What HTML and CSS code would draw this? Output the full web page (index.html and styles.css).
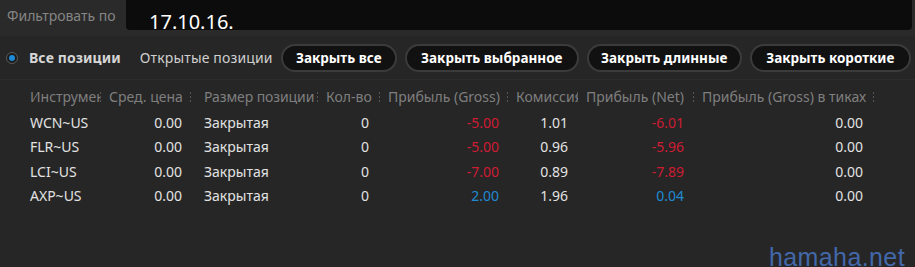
FILE: index.html
```html
<!DOCTYPE html>
<html lang="ru">
<head>
<meta charset="utf-8">
<link rel="stylesheet" href="styles.css">
</head>
<body>
<div class="topbar">
  <div class="filter-label">Фильтровать по</div>
  <div class="filter-input"><span class="filter-value">17.10.16.</span></div>
</div>
<div class="toolbar">
  <span class="radio"><span class="radio-dot"></span></span>
  <span class="tab tab-active">Все позиции</span>
  <span class="tab">Открытые позиции</span>
  <div class="buttons">
    <button class="btn btn-1">Закрыть все</button>
    <button class="btn btn-2">Закрыть выбранное</button>
    <button class="btn btn-3">Закрыть длинные</button>
    <button class="btn btn-4">Закрыть короткие</button>
  </div>
</div>
<div class="table">
  <div class="row head">
    <div class="c c1">Инструмент</div>
    <div class="c c2">Сред. цена</div>
    <div class="c c3">Размер позиции</div>
    <div class="c c4">Кол-во</div>
    <div class="c c5">Прибыль (Gross)</div>
    <div class="c c6">Комиссия</div>
    <div class="c c7">Прибыль (Net)</div>
    <div class="c c8">Прибыль (Gross) в тиках</div>
  </div>
  <div class="row">
    <div class="c c1">WCN~US</div><div class="c c2 r">0.00</div><div class="c c3">Закрытая</div><div class="c c4 r">0</div>
    <div class="c c5 r neg">-5.00</div><div class="c c6 r">1.01</div><div class="c c7 r neg">-6.01</div><div class="c c8 r">0.00</div>
  </div>
  <div class="row">
    <div class="c c1">FLR~US</div><div class="c c2 r">0.00</div><div class="c c3">Закрытая</div><div class="c c4 r">0</div>
    <div class="c c5 r neg">-5.00</div><div class="c c6 r">0.96</div><div class="c c7 r neg">-5.96</div><div class="c c8 r">0.00</div>
  </div>
  <div class="row">
    <div class="c c1">LCI~US</div><div class="c c2 r">0.00</div><div class="c c3">Закрытая</div><div class="c c4 r">0</div>
    <div class="c c5 r neg">-7.00</div><div class="c c6 r">0.89</div><div class="c c7 r neg">-7.89</div><div class="c c8 r">0.00</div>
  </div>
  <div class="row">
    <div class="c c1">AXP~US</div><div class="c c2 r">0.00</div><div class="c c3">Закрытая</div><div class="c c4 r">0</div>
    <div class="c c5 r pos">2.00</div><div class="c c6 r">1.96</div><div class="c c7 r pos">0.04</div><div class="c c8 r">0.00</div>
  </div>
</div>
<div class="watermark">hamaha.net</div>
</body>
</html>
```
FILE: styles.css
```css
html, body {
  margin: 0;
  padding: 0;
  background: #262626;
  font-family: "Noto Sans", "Open Sans", sans-serif;
  font-size: 14px;
  color: #e2e2e2;
  width: 915px;
  height: 267px;
  overflow: hidden;
}
.topbar {
  display: flex;
  align-items: flex-start;
  height: 36px;
  background: #2a2a2a;
}
.filter-label {
  width: 126px;
  padding-left: 7px;
  box-sizing: border-box;
  line-height: 31px;
  color: #858585;
  font-size: 14px;
  white-space: nowrap;
}
.filter-input {
  flex: 1;
  height: 30px;
  margin-right: 3px;
  background: #0c0c0c;
  border-radius: 0 0 4px 4px;
  overflow: hidden;
  padding-left: 23px;
}
.filter-value {
  display: block;
  font-size: 20px;
  line-height: 20px;
  padding-top: 12px;
  color: #ffffff;
}
.toolbar {
  display: flex;
  align-items: center;
  height: 44px;
  box-sizing: border-box;
  border-bottom: 1px solid #2c2c2c;
}
.radio {
  width: 10px;
  height: 10px;
  margin-left: 6px;
  border-radius: 50%;
  border: 1px solid #5a5a5a;
  background: #1b1b1b;
  display: flex;
  align-items: center;
  justify-content: center;
}
.radio-dot {
  width: 6px;
  height: 6px;
  border-radius: 50%;
  background: #1e8ad6;
}
.tab {
  color: #cfcfcf;
  font-size: 14px;
  white-space: nowrap;
  letter-spacing: 0.15px;
}
.tab-active {
  font-weight: bold;
  color: #d6d6d6;
  margin-left: 11px;
  margin-right: 19px;
  letter-spacing: 0.1px;
}
.buttons {
  display: flex;
  gap: 8px;
  margin-left: 8px;
}
.btn {
  font-family: "Noto Sans", "Open Sans", sans-serif;
  font-size: 13.5px;
  font-weight: bold;
  color: #ffffff;
  background: #111111;
  border: 2px solid #3b3b3b;
  border-radius: 14px;
  height: 28px;
  padding: 0;
  box-sizing: border-box;
  white-space: nowrap;
}
.btn-1 { width: 116px; }
.btn-2 { width: 174px; }
.btn-3 { width: 155px; }
.btn-4 { width: 161px; }
.table {
  padding-left: 25px;
  padding-top: 4px;
}
.row {
  display: grid;
  grid-template-columns: 76px 90px 127px 62px 128px 70px 116px 180px;
  height: 24.33px;
  line-height: 24px;
}
.head {
  color: #7f7f7f;
  height: 25px;
  line-height: 25px;
  margin-bottom: 2px;
}
.c {
  white-space: nowrap;
  overflow: hidden;
  position: relative;
}
.head .c {
  padding-left: 8px;
  padding-right: 0;
  text-align: left;
  overflow: visible;
}
.head .c1, .head .c6 { overflow: hidden; }
.head .c1 { padding-left: 2px; }
.head .c3 { padding-left: 6px; letter-spacing: -0.1px; }
.head .c::after {
  content: "";
  position: absolute;
  right: 0;
  top: 8px;
  width: 1px;
  height: 10px;
  background: repeating-linear-gradient(to bottom, #555 0, #555 2px, transparent 2px, transparent 4px);
}
.row .c1 { padding-left: 5px; }
.row .c3 { padding-left: 13px; }
.r { text-align: right; }
.row .c2 { padding-right: 9px; }
.row .c4 { padding-right: 11px; }
.row .c5 { padding-right: 9px; }
.row .c6 { padding-right: 10px; }
.row .c7 { padding-right: 10px; }
.row .c8 { padding-right: 11px; }
.neg { color: #cf1b33; }
.pos { color: #1f8ad2; }
.watermark {
  position: absolute;
  right: 10px;
  bottom: -5px;
  font-family: "Liberation Sans", sans-serif;
  font-size: 25px;
  color: #4268aa;
  letter-spacing: 0.4px;
}
```
